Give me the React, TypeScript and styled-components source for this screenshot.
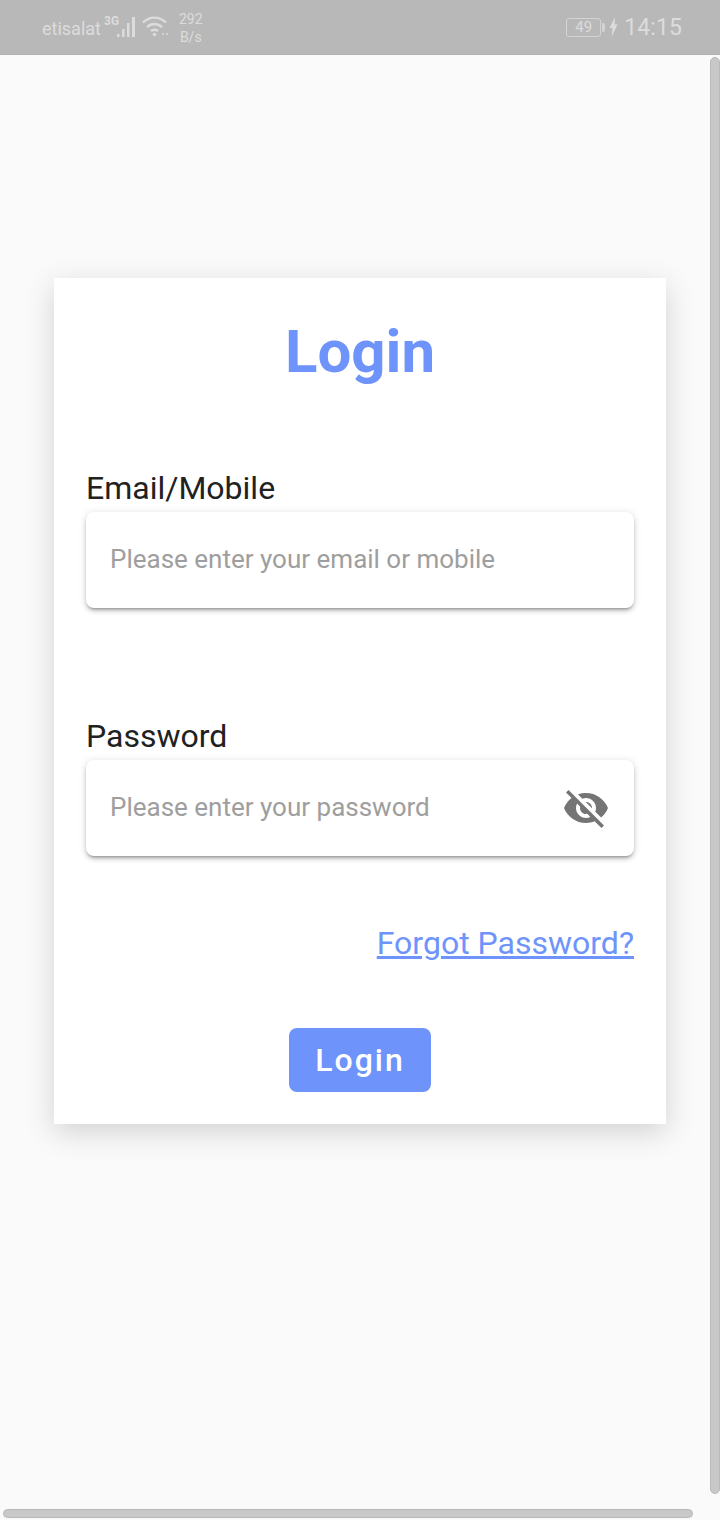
import React from "react";
import styled, { createGlobalStyle } from "styled-components";
import { MdVisibilityOff } from "react-icons/md";

const GlobalStyle = createGlobalStyle`
  html, body {
    margin: 0;
    padding: 0;
    background: #fafafa;
    overflow: hidden;
  }
  * {
    box-sizing: border-box;
  }
`;

const Page = styled.div`
  position: relative;
  width: 720px;
  height: 1520px;
  background: #fafafa;
  font-family: Roboto, "Liberation Sans", sans-serif;
  overflow: hidden;
`;

const StatusBar = styled.div`
  height: 55px;
  background: #b8b8b8;
  border-bottom: 1px solid #b0b0b0;
  padding: 0 38px 0 42px;
  display: flex;
  align-items: center;
  justify-content: space-between;
  color: #dcdcdc;
`;

const StatusGroup = styled.div`
  display: flex;
  align-items: center;
`;

const Carrier = styled.span`
  font-size: 18px;
  margin-top: 2px;
`;

const NetSpeed = styled.div`
  margin: 2px 0 0 10px;
  font-size: 14px;
  line-height: 18px;
  text-align: center;
`;

const BatteryBox = styled.div`
  width: 35px;
  height: 19px;
  border: 1px solid #d4d4d4;
  border-radius: 3px;
  font-size: 15px;
  line-height: 17px;
  text-align: center;
`;

const BatteryTip = styled.div`
  width: 3px;
  height: 9px;
  margin-left: 1px;
  background: #d4d4d4;
  border-radius: 0 2px 2px 0;
`;

const Time = styled.span`
  font-size: 23px;
  margin-left: 6px;
  letter-spacing: 0.1px;
`;

const Content = styled.main`
  padding: 223px 54px 0;
`;

const Card = styled.form`
  height: 846px;
  background: #fff;
  box-shadow: 0 8px 28px rgba(0, 0, 0, 0.16);
  padding: 0 32px;
  display: flex;
  flex-direction: column;
`;

const Title = styled.h1`
  margin: 39px 0 0;
  height: 70px;
  color: #6e94fb;
  font-size: 60px;
  line-height: 70px;
  font-weight: 700;
  text-align: center;
`;

const Field = styled.div<{ $top: number }>`
  margin-top: ${(p) => p.$top}px;
`;

const Label = styled.label`
  display: block;
  height: 32px;
  color: #212121;
  font-size: 32px;
  line-height: 32px;
`;

const InputWrap = styled.div`
  height: 96px;
  margin-top: 8px;
  padding: 0 24px;
  background: #fff;
  border-radius: 8px;
  box-shadow: 0 3px 3px -2px rgba(0, 0, 0, 0.3), 0 3px 4px rgba(0, 0, 0, 0.16), 0 1px 8px rgba(0, 0, 0, 0.12);
  display: flex;
  align-items: center;
  justify-content: space-between;
`;

const Input = styled.input`
  flex: 1;
  min-width: 0;
  border: 0;
  outline: 0;
  padding: 0;
  margin-top: -2px;
  background: transparent;
  font-family: inherit;
  font-size: 26px;
  &::placeholder {
    color: #9e9e9e;
    opacity: 1;
  }
`;

const EyeIcon = styled(MdVisibilityOff)`
  color: #757575;
  font-size: 48px;
`;

const ForgotRow = styled.div`
  margin-top: 68px;
  display: flex;
  justify-content: flex-end;
`;

const Forgot = styled.a`
  color: #6e94fb;
  font-size: 32px;
  line-height: 38px;
  text-decoration: underline;
`;

const SubmitRow = styled.div`
  margin-top: 66px;
  display: flex;
  justify-content: center;
`;

const Submit = styled.button`
  width: 142px;
  height: 64px;
  border: 0;
  border-radius: 8px;
  background: #6e94fb;
  color: #fff;
  font-family: inherit;
  font-size: 32px;
  font-weight: 500;
  letter-spacing: 2px;
`;

const ScrollThumb = styled.div<{ $vertical?: boolean }>`
  position: absolute;
  background: #c8c8c8;
  border: 1px solid #b8b8b8;
  border-radius: 5px;
  ${(p) =>
    p.$vertical
      ? "top: 57px; right: 0; width: 10px; height: 1437px;"
      : "left: 3px; bottom: 2px; width: 690px; height: 9px;"}
`;

function SignalIcon() {
  return (
    <svg width="34" height="28" viewBox="0 0 34 28" fill="#dcdcdc" style={{ marginLeft: 3 }}>
      <text x="0" y="12" fontSize="12" fontWeight="700" fontFamily="Roboto, sans-serif">3G</text>
      <rect x="13" y="21" width="2.500" height="3" />
      <rect x="18" y="16" width="2.500" height="8" />
      <rect x="23" y="10" width="2.500" height="14" />
      <rect x="28" y="4" width="3" height="20" />
    </svg>
  );
}

function WifiIcon() {
  return (
    <svg width="27" height="24" viewBox="0 0 27 24" fill="none" stroke="#dcdcdc" strokeWidth="2.400" style={{ marginLeft: 4 }}>
      <path d="M1 7.500C8 1 17 1 24 7.500" />
      <path d="M5 12C9.500 8 15.500 8 20 12" />
      <path d="M9 16C11 14.500 14 14.500 16 16" />
      <circle cx="12.500" cy="19.500" r="1.800" fill="#dcdcdc" stroke="none" />
      <path d="M20 19h2M24 19h2" strokeWidth="1.500" />
    </svg>
  );
}

function BoltIcon() {
  return (
    <svg width="9" height="20" viewBox="0 0 9 20" fill="#dcdcdc" style={{ marginLeft: 4 }}>
      <path d="M6 0L0.500 11h3L2.500 20l6-12.500H5.500z" />
    </svg>
  );
}

export default function App() {
  return (
    <Page>
      <GlobalStyle />
      <StatusBar>
        <StatusGroup>
          <Carrier>etisalat</Carrier>
          <SignalIcon />
          <WifiIcon />
          <NetSpeed>
            292
            <br />
            B/s
          </NetSpeed>
        </StatusGroup>
        <StatusGroup>
          <BatteryBox>49</BatteryBox>
          <BatteryTip />
          <BoltIcon />
          <Time>14:15</Time>
        </StatusGroup>
      </StatusBar>
      <Content>
        <Card>
          <Title>Login</Title>
          <Field $top={85}>
            <Label>Email/Mobile</Label>
            <InputWrap>
              <Input placeholder="Please enter your email or mobile" />
            </InputWrap>
          </Field>
          <Field $top={112}>
            <Label>Password</Label>
            <InputWrap>
              <Input placeholder="Please enter your password" />
              <EyeIcon />
            </InputWrap>
          </Field>
          <ForgotRow>
            <Forgot href="#">Forgot Password?</Forgot>
          </ForgotRow>
          <SubmitRow>
            <Submit type="button">Login</Submit>
          </SubmitRow>
        </Card>
      </Content>
      <ScrollThumb $vertical />
      <ScrollThumb />
    </Page>
  );
}
